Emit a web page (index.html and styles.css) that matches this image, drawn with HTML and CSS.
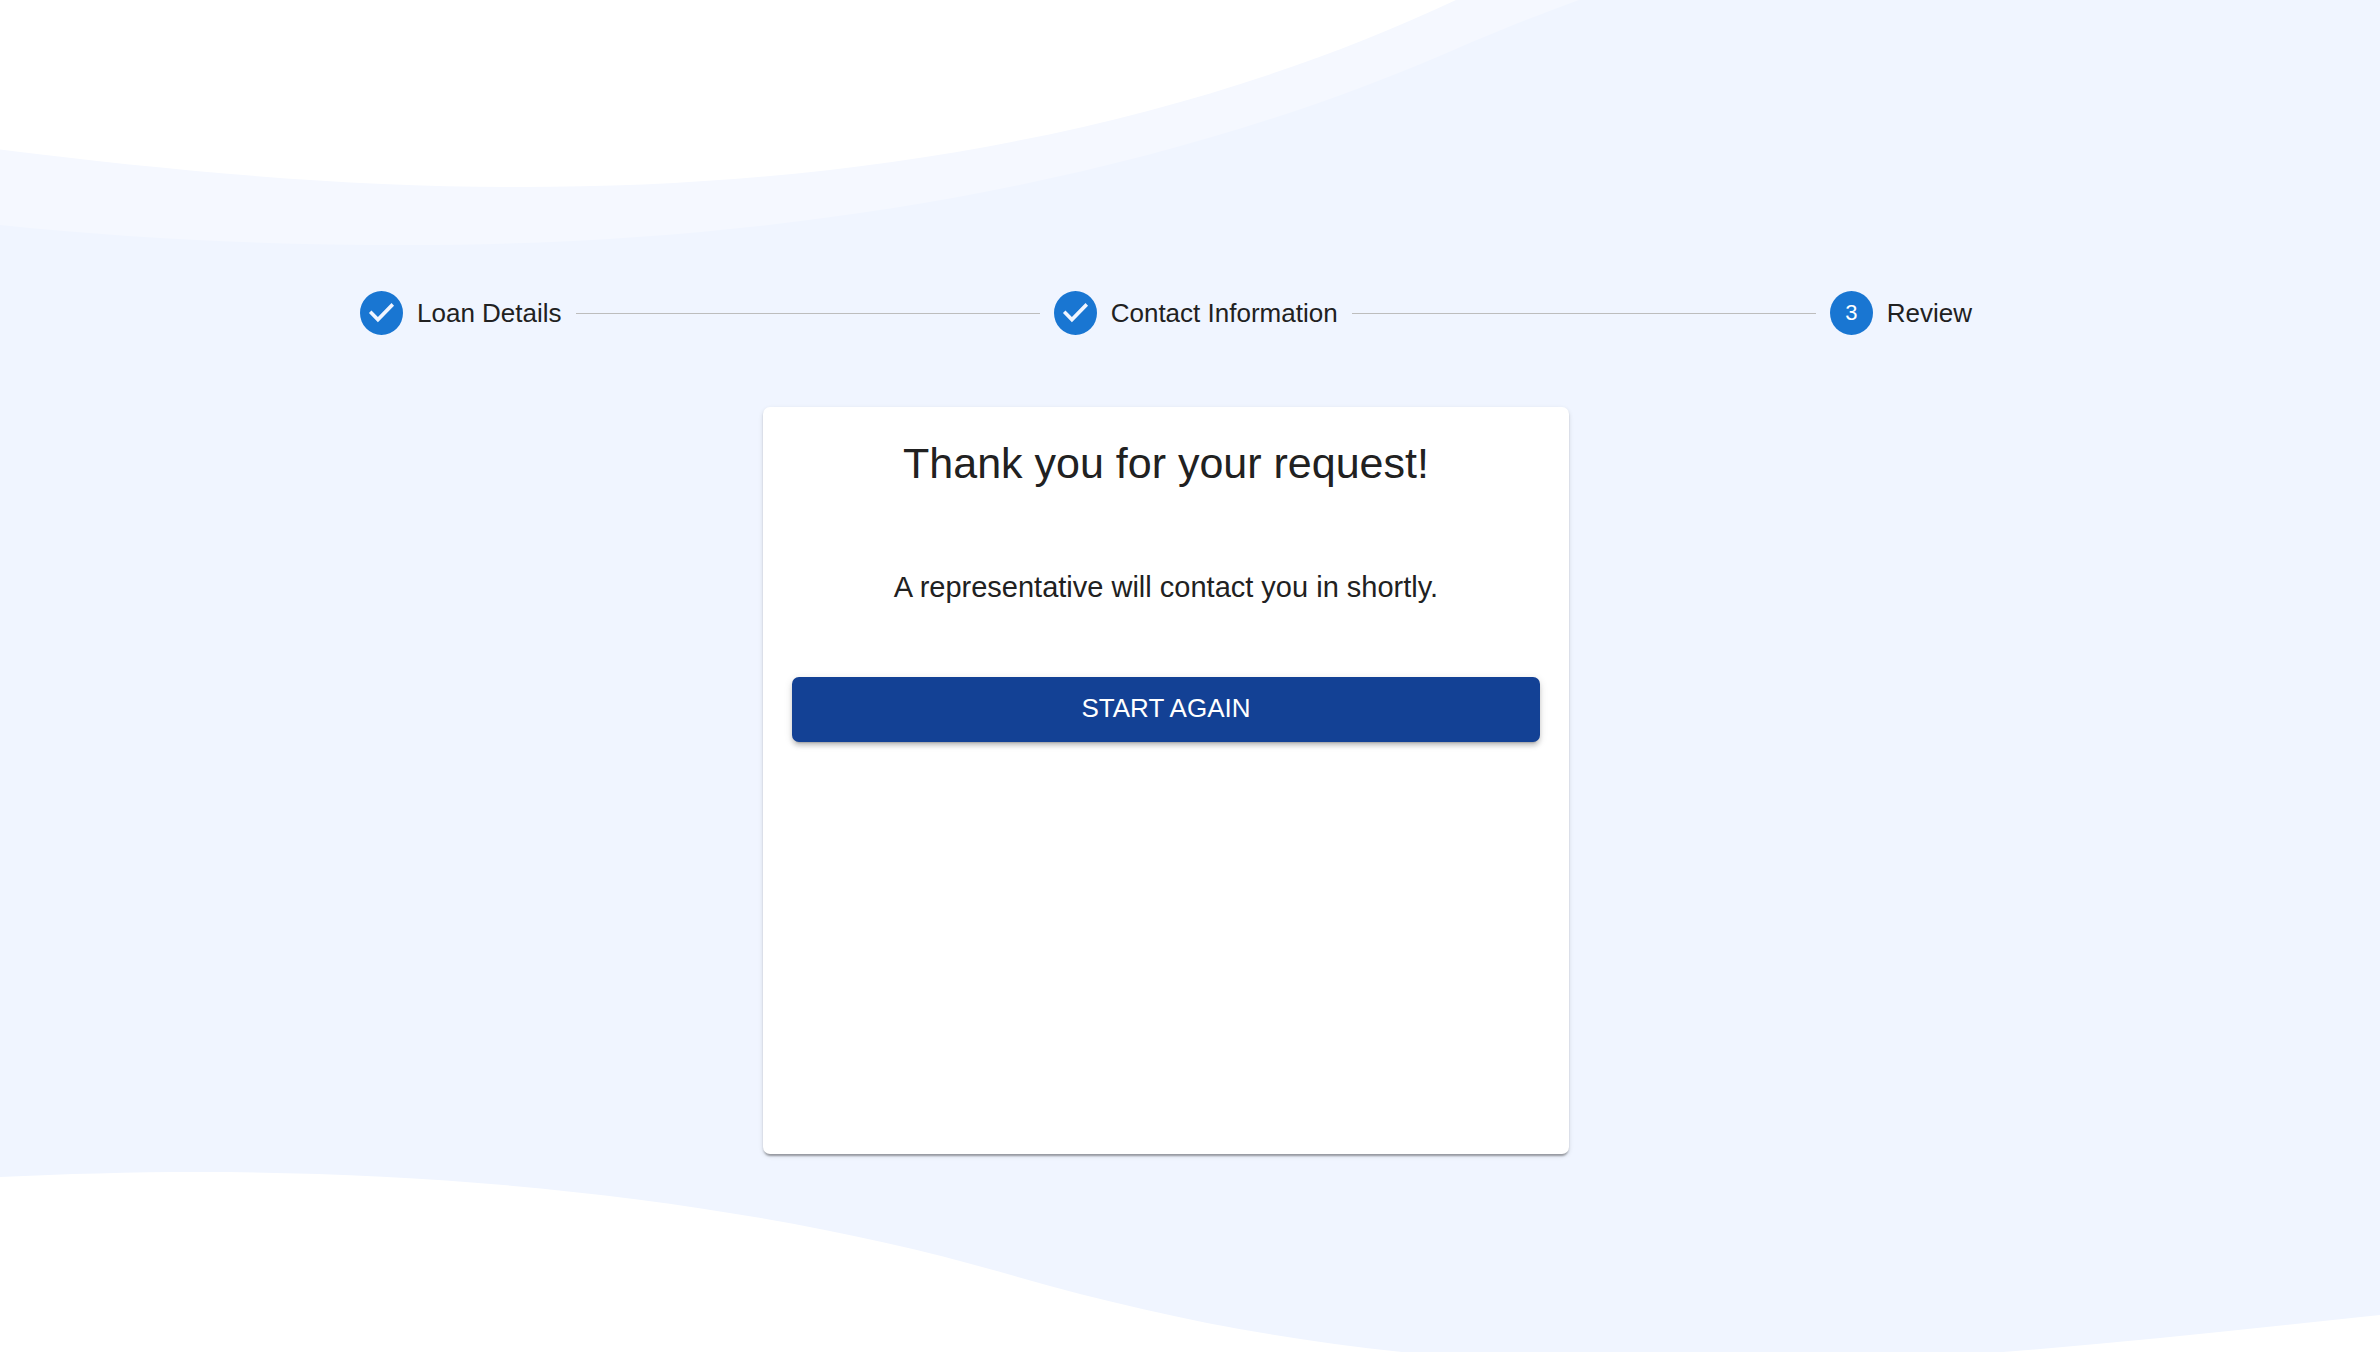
FILE: index.html
```html
<!DOCTYPE html>
<html lang="en">
<head>
  <meta charset="utf-8">
  <meta name="viewport" content="width=device-width, initial-scale=1">
  <title>Loan Request</title>
  <link rel="stylesheet" href="styles.css">
</head>
<body>
  <svg class="waves" viewBox="0 0 2380 1352" preserveAspectRatio="none" aria-hidden="true">
    <path fill="#f5f8ff" d="M0 0V225C135 239 270 245 407 245C790 245 1150 180 1442 55C1490 34 1530 18 1579 0Z"/>
    <path fill="#fff" d="M0 0V149.600C180 172 350 187 520 187C870 187 1190 125 1456 0Z"/>
    <path fill="#fff" d="M0 1352V1177C65 1174 130 1172 200 1172C480 1172 770 1205 1011 1275C1140 1312 1260 1337 1402 1352Z"/>
    <path fill="#fff" d="M2003 1352C2130 1342 2250 1329 2380 1315V1352Z"/>
  </svg>
  <div class="page">
    <main class="container">
      <ol class="stepper">
        <li class="step">
          <svg class="step-icon" viewBox="0 0 24 24" preserveAspectRatio="none" aria-hidden="true">
            <path fill="currentColor" d="M12 0a12 12 0 1 0 0 24 12 12 0 0 0 0-24zm-2 17l-5-5 1.400-1.400 3.600 3.600 7.600-7.600L19 8l-9 9z"/>
          </svg>
          <span>Loan Details</span>
        </li>
        <li class="connector" aria-hidden="true"></li>
        <li class="step">
          <svg class="step-icon" viewBox="0 0 24 24" preserveAspectRatio="none" aria-hidden="true">
            <path fill="currentColor" d="M12 0a12 12 0 1 0 0 24 12 12 0 0 0 0-24zm-2 17l-5-5 1.400-1.400 3.600 3.600 7.600-7.600L19 8l-9 9z"/>
          </svg>
          <span>Contact Information</span>
        </li>
        <li class="connector" aria-hidden="true"></li>
        <li class="step" aria-current="step">
          <span class="step-icon step-number">3</span>
          <span>Review</span>
        </li>
      </ol>
      <section class="card">
        <h1 class="title">Thank you for your request!</h1>
        <p class="message">A representative will contact you in shortly.</p>
        <button class="button" type="button">START AGAIN</button>
      </section>
    </main>
  </div>
</body>
</html>
```
FILE: styles.css
```css
* {
  box-sizing: border-box;
}

body {
  margin: 0;
  background: #f0f5ff;
  color: #212121;
  font-family: "Liberation Sans", Helvetica, Arial, sans-serif;
}

.waves {
  position: absolute;
  inset: 0;
  z-index: -1;
  width: 100%;
  height: 100%;
}

.page {
  min-height: 100vh;
  padding: 291px 48px 48px 0;
}

.container {
  max-width: 1612px;
  margin: 0 auto;
}

.stepper {
  display: flex;
  align-items: center;
  gap: 14px;
  margin: 0 0 72px;
  padding: 0;
  list-style: none;
  font-size: 26px;
  line-height: 36px;
}

.step {
  display: flex;
  align-items: center;
  gap: 14px;
  white-space: nowrap;
}

.step-icon {
  flex: none;
  width: 43px;
  height: 44px;
  color: #1976d2;
}

.step-number {
  border-radius: 50%;
  background: #1976d2;
  color: #fff;
  font-size: 22px;
  line-height: 44px;
  text-align: center;
}

.connector {
  flex: 1;
  border-top: 1px solid #bdbdbd;
}

.card {
  width: 50%;
  min-height: 747px;
  margin: 0 auto;
  padding: 29px;
  border-radius: 7px;
  background: #fff;
  box-shadow: 0 4px 2px -2px rgba(0, 0, 0, 0.2), 0 2px 2px rgba(0, 0, 0, 0.14), 0 2px 5px rgba(0, 0, 0, 0.12);
  text-align: center;
}

.title {
  margin: 0;
  font-size: 43px;
  font-weight: 400;
  line-height: 54px;
}

.message {
  margin: 76px 0 68px;
  font-size: 29px;
  line-height: 43px;
}

.button {
  display: block;
  width: 100%;
  padding: 9px 20px 11px;
  border: 0;
  border-radius: 7px;
  background: #134195;
  box-shadow: 0 5px 2px -4px rgba(0, 0, 0, 0.2), 0 4px 4px rgba(0, 0, 0, 0.14), 0 2px 9px rgba(0, 0, 0, 0.12);
  color: #fff;
  font-family: inherit;
  font-size: 26px;
  line-height: 45px;
  cursor: pointer;
}
```
